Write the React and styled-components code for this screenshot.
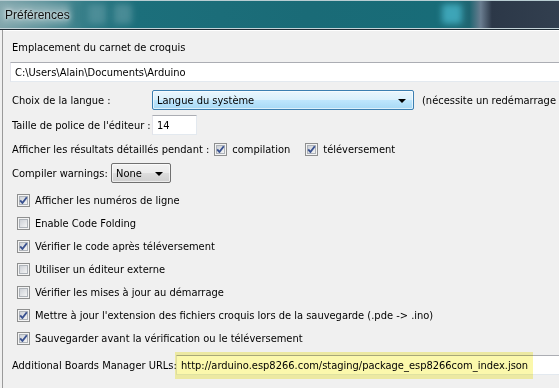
import React from "react";
import styled, { createGlobalStyle } from "styled-components";

const Global = createGlobalStyle`
  html, body { margin: 0; padding: 0; background: #f0f0f0; overflow: hidden; }
  body { width: 559px; height: 388px; font-family: "DejaVu Sans Condensed", "Liberation Sans", Arial, sans-serif; font-size: 11px; color: #000; }
`;

const Window = styled.div`
  width: 559px;
  height: 388px;
  display: flex;
  flex-direction: column;
  overflow: hidden;
`;

const TitleBar = styled.div`
  position: relative;
  height: 27px;
  flex: none;
  display: flex;
  align-items: center;
  padding-left: 5px;
  background: linear-gradient(to right, #7fa4aa 0%, #5d939b 8%, #2f7a85 16%, #1c6f7b 24%, #1a6b77 55%, #186c78 78%, #1f6571 84%, #6a7d90 86%, #2c3848 88%, #323f4f 100%);
  border-top: 1px solid #b8cdd2;
  border-bottom: 1px solid #c4d3d8;
  box-shadow: 0 1px 0 #1d2a33;
  overflow: hidden;
`;

const Blur = styled.span`
  position: absolute;
  top: 3px;
  left: ${(p) => p.$x}px;
  width: ${(p) => p.$w}px;
  height: 20px;
  background: ${(p) => p.$c};
  filter: blur(3px);
  border-radius: 3px;
`;

const TitleText = styled.span`
  position: relative;
  font-family: "Liberation Sans", Arial, sans-serif;
  font-size: 12px;
  color: #111;
  text-shadow: 0 0 6px rgba(255, 255, 255, 0.8), 0 0 3px rgba(255, 255, 255, 0.8);
`;

const Frame = styled.div`
  flex: 1;
  margin-top: 1px;
  margin-left: 2px;
  border-left: 1px solid #9a9a9a;
  box-shadow: inset 0 1px 0 #ffffff;
  display: flex;
  flex-direction: column;
  padding: 7px 0 0 7px;
`;

const Row = styled.div`
  display: flex;
  align-items: center;
  height: ${(p) => p.$h ?? 20}px;
  margin-top: ${(p) => p.$mt ?? 0}px;
  padding-left: ${(p) => p.$pl ?? 0}px;
  white-space: nowrap;
  flex: none;
`;

const Label = styled.span`
  display: inline-block;
  width: ${(p) => (p.$w ? p.$w + "px" : "auto")};
  flex: none;
`;

const TextBox = styled.div`
  height: 20px;
  box-sizing: border-box;
  width: ${(p) => (p.$w ? p.$w + "px" : "auto")};
  flex: ${(p) => (p.$w ? "none" : "1")};
  margin-right: ${(p) => (p.$w ? 0 : -20)}px;
  background: #fff;
  border: 1px solid #e3e9ef;
  border-top-color: #abadb3;
  border-left-color: #e2e3ea;
  display: flex;
  align-items: center;
  padding-left: 4px;
`;

const Combo = styled.div`
  position: relative;
  height: 20px;
  box-sizing: border-box;
  width: ${(p) => p.$w}px;
  flex: none;
  border: 1px solid ${(p) => (p.$hot ? "#3c7fb1" : "#707070")};
  border-radius: 2px;
  background: ${(p) =>
    p.$hot
      ? "linear-gradient(#eaf6fd 0%, #d9f0fc 50%, #bee6fd 51%, #a7d9f5 100%)"
      : "linear-gradient(#f2f2f2 0%, #ebebeb 50%, #dddddd 51%, #cfcfcf 100%)"};
  box-shadow: inset 0 0 0 1px rgba(255, 255, 255, 0.6);
  display: flex;
  align-items: center;
  padding-left: 4px;
`;

const Arrow = styled.span`
  position: absolute;
  right: 7px;
  top: 8px;
  width: 0;
  height: 0;
  border-left: 4px solid transparent;
  border-right: 4px solid transparent;
  border-top: 4px solid #000;
`;

const Note = styled.span`
  margin-left: 8px;
`;

const Check = ({ checked }) => (
  <svg width="13" height="13" viewBox="0 0 13 13" style={{ flex: "none" }}>
    <defs>
      <linearGradient id={checked ? "gc" : "gu"} x1="0" y1="0" x2="1" y2="1">
        <stop offset="0" stopColor="#cbcfd5" />
        <stop offset="1" stopColor="#f6f6f6" />
      </linearGradient>
    </defs>
    <rect x="0.5" y="0.5" width="12" height="12" fill="#f4f4f4" stroke="#8e8f8f" />
    <rect x="2.5" y="2.5" width="8" height="8" fill={`url(#${checked ? "gc" : "gu"})`} stroke="#aeb3b9" strokeWidth="1" />
    {checked && (
      <path d="M3.2 6.4 L5.4 9 L9.8 3.2" fill="none" stroke="#3a5290" strokeWidth="1.9" strokeLinejoin="round" />
    )}
  </svg>
);

const CheckItem = styled.label`
  display: inline-flex;
  align-items: center;
  gap: 5px;
  margin-left: ${(p) => p.$ml || 0}px;
`;

const UrlWrap = styled.div`
  position: relative;
  flex: 1;
  display: flex;
  margin-right: -20px;
`;

const Highlight = styled.span`
  position: absolute;
  left: -1px;
  top: -3px;
  width: 358px;
  height: 27px;
  background: rgba(246, 240, 70, 0.45);
  mix-blend-mode: multiply;
  pointer-events: none;
`;

const checks = [
  ["Afficher les numéros de ligne", true],
  ["Enable Code Folding", false],
  ["Vérifier le code après téléversement", true],
  ["Utiliser un éditeur externe", false],
  ["Vérifier les mises à jour au démarrage", false],
  ["Mettre à jour  l'extension des fichiers croquis lors de la sauvegarde (.pde -> .ino)", true],
  ["Sauvegarder avant la vérification ou le téléversement", true],
];

export default function App() {
  return (
    <>
      <Global />
      <Window>
        <TitleBar>
          <Blur $x={0} $w={70} $c="rgba(160,190,195,0.55)" />
          <Blur $x={88} $w={18} $c="rgba(90,150,160,0.7)" />
          <Blur $x={114} $w={18} $c="rgba(90,150,160,0.7)" />
          <Blur $x={442} $w={20} $c="rgba(70,180,200,0.8)" />
          <TitleText>Préférences</TitleText>
        </TitleBar>
        <Frame>
          <Row $h={20} $pl={2}>
            <Label>Emplacement du carnet de croquis</Label>
          </Row>
          <Row $mt={5}>
            <TextBox>C:\Users\Alain\Documents\Arduino</TextBox>
          </Row>
          <Row $mt={8} $pl={2}>
            <Label $w={140}>Choix de la langue :</Label>
            <Combo $w={262} $hot>
              Langue du système
              <Arrow />
            </Combo>
            <Note>(nécessite un redémarrage d'Arduino)</Note>
          </Row>
          <Row $mt={5} $pl={2}>
            <Label $w={140}>Taille de police de l'éditeur :</Label>
            <TextBox $w={45}>14</TextBox>
          </Row>
          <Row $mt={4} $pl={2}>
            <Label>Afficher les résultats détaillés pendant :</Label>
            <CheckItem $ml={5}>
              <Check checked />
              compilation
            </CheckItem>
            <CheckItem $ml={15}>
              <Check checked />
              téléversement
            </CheckItem>
          </Row>
          <Row $mt={4} $pl={2}>
            <Label $w={99}>Compiler warnings:</Label>
            <Combo $w={60}>
              None
              <Arrow />
            </Combo>
          </Row>
          <Row $mt={6} $h={0} />
          {checks.map(([t, c]) => (
            <Row key={t} $h={23} $pl={7}>
              <CheckItem>
                <Check checked={c} />
                {t}
              </CheckItem>
            </Row>
          ))}
          <Row $mt={5} $h={20} $pl={2}>
            <Label $w={164}>Additional Boards Manager URLs:</Label>
            <UrlWrap>
              <TextBox>http://arduino.esp8266.com/staging/package_esp8266com_index.json</TextBox>
              <Highlight />
            </UrlWrap>
          </Row>
        </Frame>
      </Window>
    </>
  );
}
